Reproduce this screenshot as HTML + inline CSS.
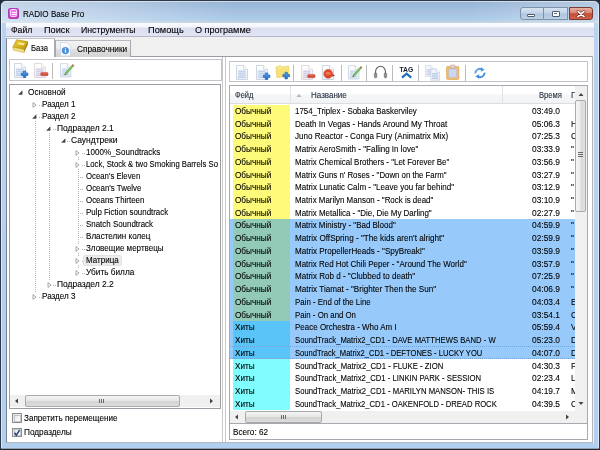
<!DOCTYPE html>
<html lang="ru"><head><meta charset="utf-8"><title>RADIO Base Pro</title>
<style>
html,body{margin:0;padding:0}
html{background:#1d2b3a}
body{width:600px;height:450px;position:relative;overflow:hidden;background:#1d2b3a;font-family:"Liberation Sans",sans-serif;font-size:8.4px;color:#000}
div,span,svg{position:absolute;box-sizing:border-box}
.t{white-space:nowrap;transform-origin:0 50%;line-height:1.2;display:block;-webkit-text-stroke:.1px currentColor}
.win{left:0;top:0;width:599.5px;height:449.3px;border:1px solid #2c3a4c;border-radius:6px 6px 0 0;
 background:linear-gradient(90deg,rgba(255,255,255,.42) 0,rgba(255,255,255,.3) 90px,rgba(255,255,255,0) 230px,rgba(255,255,255,0) 470px,rgba(255,255,255,.22) 560px,rgba(255,255,255,.25) 600px) 0 0/100% 22px no-repeat,linear-gradient(180deg,#9ab3cf 0px,#9bbbdc 5px,#a9c1e1 11px,#a9cbe9 17px,#b6cde3 20px,#c6d6e6 22px,#b9d2ef 23px,#b3cfef 100%)}
.winhl{left:1px;top:1px;width:597.5px;height:447.5px;border:1px solid rgba(255,255,255,.5);border-radius:5px 5px 0 0}
.menu{left:6px;top:22.5px;width:588.2px;height:14px;background:linear-gradient(180deg,#fafbfe 0,#f3f5fc 30%,#dcdfee 40%,#dce0f2 55%,#e0e4f5 100%);border-bottom:1px solid #b4b8c8}
.client{left:6px;top:36.5px;width:588.2px;height:406.2px;background:#f0f0f0}
.page{left:6px;top:56px;width:586.8px;height:386.8px;background:#fff;border:1px solid #b4b6bb;border-left-color:#7b8391;border-top-color:#9a9da4}
.tab1{left:6px;top:37.5px;width:49px;height:19.5px;background:#fff;border:1px solid #a9acb3;border-top-color:#c3c5ca;border-left-color:#7b8391;border-bottom:none}
.tab2{left:54.5px;top:39.5px;width:76.2px;height:17px;background:linear-gradient(180deg,#f3f3f3 0,#ececec 45%,#dfdfdf 55%,#d3d3d3 100%);border:1px solid #a4a7ae;border-top-color:#b9bcc2;border-bottom:none}
.box{background:#fff;border:1px solid #a3a6ad}
.sep{width:1px;background:#b9b9b9}
</style></head><body style="filter:blur(.35px)">

<div class="win"></div><div class="winhl"></div>
<div style="left:7.8px;top:7.7px;width:11.6px;height:11.4px;border-radius:2px;border:1px solid #b23ab4;background:linear-gradient(180deg,#e05ad8,#c63cc6)"></div>
<div style="left:10.2px;top:9.4px;width:6.8px;height:8px;border-radius:1.5px;border:1px solid #fbd5fb;background:#ee7aec"></div>
<div style="left:11.6px;top:12px;width:4px;height:.9px;background:#fff"></div>
<div style="left:11.6px;top:14.2px;width:4px;height:.9px;background:#fff"></div>
<span class="t" style="left:23px;top:9.0px;font-size:9.0px;color:#000;transform:scaleX(0.900);">RADIO Base Pro</span>
<div style="left:519.5px;top:6.5px;width:24px;height:13px;border:1px solid #7f90a8;border-radius:3px 0 0 3px;background:linear-gradient(180deg,#d6e2f0 0,#c2d3e8 48%,#aec4de 52%,#bdd0e6 100%)"></div>
<div style="left:543.5px;top:6.5px;width:24.5px;height:13px;border:1px solid #7f90a8;border-left:none;background:linear-gradient(180deg,#d6e2f0 0,#c2d3e8 48%,#aec4de 52%,#bdd0e6 100%)"></div>
<div style="left:569px;top:6.5px;width:24px;height:13px;border:1px solid #7a3a32;border-radius:0 3px 3px 0;background:linear-gradient(180deg,#e8b0a3 0,#d98572 45%,#c84c36 52%,#d0614a 100%)"></div>
<div style="left:527px;top:13.5px;width:8px;height:3px;background:#fff;border:0.6px solid #4d5b6e;border-radius:1px"></div>
<div style="left:551.5px;top:10.5px;width:8px;height:6px;background:#fff;border:0.6px solid #4d5b6e;border-radius:1px"></div>
<div style="left:553.6px;top:12.7px;width:3.8px;height:1.8px;background:#5a6a80"></div>
<svg style="left:576px;top:9.6px" width="10" height="8" viewBox="0 0 10 8"><path d="M2 1.4 L8 6.6 M8 1.4 L2 6.6" stroke="#6a2a20" stroke-width="2.8" stroke-linecap="round"/><path d="M2 1.4 L8 6.6 M8 1.4 L2 6.6" stroke="#fff" stroke-width="1.7" stroke-linecap="round"/></svg>
<div class="menu"></div>
<span class="t" style="left:11.3px;top:25.0px;font-size:9.2px;color:#000;transform:scaleX(0.943);">Файл</span>
<span class="t" style="left:44.3px;top:25.0px;font-size:9.2px;color:#000;transform:scaleX(1.001);">Поиск</span>
<span class="t" style="left:81.3px;top:25.0px;font-size:9.2px;color:#000;transform:scaleX(0.951);">Инструменты</span>
<span class="t" style="left:148.2px;top:25.0px;font-size:9.2px;color:#000;transform:scaleX(1.006);">Помощь</span>
<span class="t" style="left:195.4px;top:25.0px;font-size:9.2px;color:#000;transform:scaleX(0.991);">О программе</span>
<div class="client"></div>
<div class="page"></div>
<div class="tab2"></div><div class="tab1"></div>
<span class="t" style="left:31px;top:42.8px;font-size:8.6px;color:#000;transform:scaleX(0.893);">База</span>
<span class="t" style="left:77px;top:44.0px;font-size:8.6px;color:#000;transform:scaleX(0.964);">Справочники</span>
<div class="box" style="left:9px;top:58.8px;width:212.5px;height:22px;border-color:#c2c4c9"></div>
<div class="box" style="left:9px;top:84px;width:211.5px;height:324.6px;border-color:#9a9da4"></div>
<div style="left:222px;top:57px;width:1px;height:385px;background:#c8c8c8"></div>
<div style="left:225.2px;top:57px;width:1px;height:385px;background:#c8c8c8"></div>
<div class="box" style="left:229px;top:61px;width:358.8px;height:21px;border-color:#c2c4c9"></div>
<div class="box" style="left:229px;top:85px;width:358.8px;height:339px;border-color:#a6a9af"></div>
<div class="box" style="left:229px;top:423.2px;width:358.8px;height:16.6px;border-color:#a6a9af"></div>
<span class="t" style="left:232.5px;top:426.9px;font-size:8.7px;color:#000;transform:scaleX(0.939);">Всего: 62</span>
<div style="left:10px;top:85px;width:209.5px;height:309.5px;overflow:hidden">
<div style="left:25px;top:35.599999999999994px;width:1px;height:172.00000000000003px;background:repeating-linear-gradient(180deg,#b4b4b4 0,#b4b4b4 1px,transparent 1px,transparent 2px)"></div>
<div style="left:39.3px;top:47.599999999999994px;width:1px;height:148.00000000000003px;background:repeating-linear-gradient(180deg,#b4b4b4 0,#b4b4b4 1px,transparent 1px,transparent 2px)"></div>
<div style="left:67.8px;top:71.6px;width:1px;height:112.00000000000003px;background:repeating-linear-gradient(180deg,#b4b4b4 0,#b4b4b4 1px,transparent 1px,transparent 2px)"></div>
<svg style="left:6.699999999999999px;top:4.0px" width="7" height="7" viewBox="0 0 7 7"><rect x="0" y="0" width="7" height="7" fill="#fff"/><path d="M5.2 1.8 L5.2 5.4 L1.6 5.4 Z" fill="#4a4a4a" stroke="#333" stroke-width=".4"/></svg>
<span class="t" style="left:18.0px;top:2.0px;font-size:8.7px;color:#000;transform:scaleX(0.944);">Основной</span>
<svg style="left:21.199999999999996px;top:15.599999999999994px" width="7" height="8" viewBox="0 0 7 8"><rect x="0" y="0" width="7" height="8" fill="#fff"/><path d="M2 1.6 L5.1 4 L2 6.4 Z" fill="#fff" stroke="#929292" stroke-width=".8"/></svg>
<div style="left:28.799999999999997px;top:19.599999999999994px;width:3.0px;height:1px;background:repeating-linear-gradient(90deg,#b4b4b4 0,#b4b4b4 1px,transparent 1px,transparent 2px)"></div>
<span class="t" style="left:32.3px;top:14.0px;font-size:8.7px;color:#000;transform:scaleX(0.931);">Раздел 1</span>
<svg style="left:20.999999999999996px;top:28.0px" width="7" height="7" viewBox="0 0 7 7"><rect x="0" y="0" width="7" height="7" fill="#fff"/><path d="M5.2 1.8 L5.2 5.4 L1.6 5.4 Z" fill="#4a4a4a" stroke="#333" stroke-width=".4"/></svg>
<div style="left:28.799999999999997px;top:31.599999999999994px;width:3.0px;height:1px;background:repeating-linear-gradient(90deg,#b4b4b4 0,#b4b4b4 1px,transparent 1px,transparent 2px)"></div>
<span class="t" style="left:32.3px;top:26.0px;font-size:8.7px;color:#000;transform:scaleX(0.931);">Раздел 2</span>
<svg style="left:35.300000000000004px;top:40.0px" width="7" height="7" viewBox="0 0 7 7"><rect x="0" y="0" width="7" height="7" fill="#fff"/><path d="M5.2 1.8 L5.2 5.4 L1.6 5.4 Z" fill="#4a4a4a" stroke="#333" stroke-width=".4"/></svg>
<div style="left:43.1px;top:43.599999999999994px;width:3.0px;height:1px;background:repeating-linear-gradient(90deg,#b4b4b4 0,#b4b4b4 1px,transparent 1px,transparent 2px)"></div>
<span class="t" style="left:46.6px;top:38.0px;font-size:8.7px;color:#000;transform:scaleX(0.969);">Подраздел 2.1</span>
<svg style="left:49.60000000000001px;top:52.0px" width="7" height="7" viewBox="0 0 7 7"><rect x="0" y="0" width="7" height="7" fill="#fff"/><path d="M5.2 1.8 L5.2 5.4 L1.6 5.4 Z" fill="#4a4a4a" stroke="#333" stroke-width=".4"/></svg>
<div style="left:57.400000000000006px;top:55.599999999999994px;width:3.0px;height:1px;background:repeating-linear-gradient(90deg,#b4b4b4 0,#b4b4b4 1px,transparent 1px,transparent 2px)"></div>
<span class="t" style="left:60.900000000000006px;top:50.0px;font-size:8.7px;color:#000;transform:scaleX(0.976);">Саундтреки</span>
<svg style="left:64.10000000000001px;top:63.599999999999994px" width="7" height="8" viewBox="0 0 7 8"><rect x="0" y="0" width="7" height="8" fill="#fff"/><path d="M2 1.6 L5.1 4 L2 6.4 Z" fill="#fff" stroke="#929292" stroke-width=".8"/></svg>
<div style="left:71.7px;top:67.6px;width:3.0px;height:1px;background:repeating-linear-gradient(90deg,#b4b4b4 0,#b4b4b4 1px,transparent 1px,transparent 2px)"></div>
<span class="t" style="left:75.7px;top:62.0px;font-size:8.7px;color:#000;transform:scaleX(0.928);">1000%_Soundtracks</span>
<svg style="left:64.10000000000001px;top:75.6px" width="7" height="8" viewBox="0 0 7 8"><rect x="0" y="0" width="7" height="8" fill="#fff"/><path d="M2 1.6 L5.1 4 L2 6.4 Z" fill="#fff" stroke="#929292" stroke-width=".8"/></svg>
<div style="left:71.7px;top:79.6px;width:3.0px;height:1px;background:repeating-linear-gradient(90deg,#b4b4b4 0,#b4b4b4 1px,transparent 1px,transparent 2px)"></div>
<span class="t" style="left:75.7px;top:74.0px;font-size:8.7px;color:#000;transform:scaleX(0.890);">Lock, Stock &amp; two Smoking Barrels So</span>
<div style="left:68px;top:91.6px;width:6px;height:1px;background:repeating-linear-gradient(90deg,#b4b4b4 0,#b4b4b4 1px,transparent 1px,transparent 2px)"></div>
<span class="t" style="left:75.7px;top:86.0px;font-size:8.7px;color:#000;transform:scaleX(0.895);">Ocean's Eleven</span>
<div style="left:68px;top:103.6px;width:6px;height:1px;background:repeating-linear-gradient(90deg,#b4b4b4 0,#b4b4b4 1px,transparent 1px,transparent 2px)"></div>
<span class="t" style="left:75.7px;top:98.0px;font-size:8.7px;color:#000;transform:scaleX(0.911);">Ocean's Twelve</span>
<div style="left:68px;top:115.6px;width:6px;height:1px;background:repeating-linear-gradient(90deg,#b4b4b4 0,#b4b4b4 1px,transparent 1px,transparent 2px)"></div>
<span class="t" style="left:75.7px;top:110.0px;font-size:8.7px;color:#000;transform:scaleX(0.911);">Oceans Thirteen</span>
<div style="left:68px;top:127.6px;width:6px;height:1px;background:repeating-linear-gradient(90deg,#b4b4b4 0,#b4b4b4 1px,transparent 1px,transparent 2px)"></div>
<span class="t" style="left:75.7px;top:122.0px;font-size:8.7px;color:#000;transform:scaleX(0.910);">Pulp Fiction soundtrack</span>
<div style="left:68px;top:139.6px;width:6px;height:1px;background:repeating-linear-gradient(90deg,#b4b4b4 0,#b4b4b4 1px,transparent 1px,transparent 2px)"></div>
<span class="t" style="left:75.7px;top:134.0px;font-size:8.7px;color:#000;transform:scaleX(0.913);">Snatch Soundtrack</span>
<div style="left:68px;top:151.6px;width:6px;height:1px;background:repeating-linear-gradient(90deg,#b4b4b4 0,#b4b4b4 1px,transparent 1px,transparent 2px)"></div>
<span class="t" style="left:75.7px;top:146.0px;font-size:8.7px;color:#000;transform:scaleX(0.932);">Властелин колец</span>
<svg style="left:64.10000000000001px;top:159.6px" width="7" height="8" viewBox="0 0 7 8"><rect x="0" y="0" width="7" height="8" fill="#fff"/><path d="M2 1.6 L5.1 4 L2 6.4 Z" fill="#fff" stroke="#929292" stroke-width=".8"/></svg>
<div style="left:71.7px;top:163.6px;width:3.0px;height:1px;background:repeating-linear-gradient(90deg,#b4b4b4 0,#b4b4b4 1px,transparent 1px,transparent 2px)"></div>
<span class="t" style="left:75.7px;top:158.0px;font-size:8.7px;color:#000;transform:scaleX(0.926);">Зловещие мертвецы</span>
<svg style="left:64.10000000000001px;top:171.60000000000002px" width="7" height="8" viewBox="0 0 7 8"><rect x="0" y="0" width="7" height="8" fill="#fff"/><path d="M2 1.6 L5.1 4 L2 6.4 Z" fill="#fff" stroke="#929292" stroke-width=".8"/></svg>
<div style="left:71.7px;top:175.60000000000002px;width:3.0px;height:1px;background:repeating-linear-gradient(90deg,#b4b4b4 0,#b4b4b4 1px,transparent 1px,transparent 2px)"></div>
<div style="left:72.5px;top:170.20000000000002px;width:39px;height:11px;background:#ececec;border:1px solid #e2e2e2;border-radius:2px"></div>
<span class="t" style="left:75.7px;top:170.00000000000003px;font-size:8.7px;color:#000;transform:scaleX(0.922);">Матрица</span>
<svg style="left:64.10000000000001px;top:183.60000000000002px" width="7" height="8" viewBox="0 0 7 8"><rect x="0" y="0" width="7" height="8" fill="#fff"/><path d="M2 1.6 L5.1 4 L2 6.4 Z" fill="#fff" stroke="#929292" stroke-width=".8"/></svg>
<div style="left:71.7px;top:187.60000000000002px;width:3.0px;height:1px;background:repeating-linear-gradient(90deg,#b4b4b4 0,#b4b4b4 1px,transparent 1px,transparent 2px)"></div>
<span class="t" style="left:75.7px;top:182.0px;font-size:8.7px;color:#000;transform:scaleX(0.949);">Убить билла</span>
<svg style="left:35.5px;top:195.60000000000002px" width="7" height="8" viewBox="0 0 7 8"><rect x="0" y="0" width="7" height="8" fill="#fff"/><path d="M2 1.6 L5.1 4 L2 6.4 Z" fill="#fff" stroke="#929292" stroke-width=".8"/></svg>
<div style="left:43.1px;top:199.60000000000002px;width:3.0px;height:1px;background:repeating-linear-gradient(90deg,#b4b4b4 0,#b4b4b4 1px,transparent 1px,transparent 2px)"></div>
<span class="t" style="left:46.6px;top:194.0px;font-size:8.7px;color:#000;transform:scaleX(0.969);">Подраздел 2.2</span>
<svg style="left:21.199999999999996px;top:207.60000000000002px" width="7" height="8" viewBox="0 0 7 8"><rect x="0" y="0" width="7" height="8" fill="#fff"/><path d="M2 1.6 L5.1 4 L2 6.4 Z" fill="#fff" stroke="#929292" stroke-width=".8"/></svg>
<div style="left:28.799999999999997px;top:211.60000000000002px;width:3.0px;height:1px;background:repeating-linear-gradient(90deg,#b4b4b4 0,#b4b4b4 1px,transparent 1px,transparent 2px)"></div>
<span class="t" style="left:32.3px;top:206.0px;font-size:8.7px;color:#000;transform:scaleX(0.931);">Раздел 3</span>
</div>
<div style="left:10px;top:394.5px;width:209.5px;height:12.5px;background:#f0f0f0"></div>
<div style="left:24.5px;top:395px;width:155px;height:11.5px;border:1px solid #a9a9a9;border-radius:2px;background:linear-gradient(180deg,#f4f4f4 0,#e6e6e6 48%,#d4d4d4 52%,#dcdcdc 100%)"></div>
<div style="left:98.5px;top:398.5px;width:1px;height:4.5px;background:#6a6a6a"></div>
<div style="left:100.5px;top:398.5px;width:1px;height:4.5px;background:#6a6a6a"></div>
<div style="left:102.5px;top:398.5px;width:1px;height:4.5px;background:#6a6a6a"></div>
<svg style="left:13.5px;top:398px" width="5" height="6" viewBox="0 0 5 6"><path d="M4 .5 L1 3 L4 5.5Z" fill="#444"/></svg>
<svg style="left:209px;top:398px" width="5" height="6" viewBox="0 0 5 6"><path d="M1 .5 L4 3 L1 5.5Z" fill="#444"/></svg>
<div style="left:12px;top:413px;width:9.6px;height:9.6px;border:1px solid #8e8f8f;background:linear-gradient(135deg,#dfe0e1,#fafafa)"></div>
<div style="left:13.5px;top:414.5px;width:7px;height:7px;border:1px solid #c2c5c9;background:linear-gradient(135deg,#e8e9ea,#ffffff)"></div>
<span class="t" style="left:23.8px;top:412.6px;font-size:8.6px;color:#000;transform:scaleX(0.942);">Запретить перемещение</span>
<div style="left:12px;top:427.5px;width:9.6px;height:9.6px;border:1px solid #8e8f8f;background:linear-gradient(135deg,#dfe0e1,#fafafa)"></div>
<div style="left:13.5px;top:429.0px;width:7px;height:7px;border:1px solid #c2c5c9;background:linear-gradient(135deg,#e8e9ea,#ffffff)"></div>
<svg style="left:13px;top:428.5px" width="8" height="8" viewBox="0 0 8 8"><path d="M1.5 3.8 L3.3 6.2 L6.6 1.2" fill="none" stroke="#2a3f7a" stroke-width="1.5"/></svg>
<span class="t" style="left:23.8px;top:427.1px;font-size:8.6px;color:#000;transform:scaleX(0.958);">Подразделы</span>
<div style="left:230px;top:86px;width:357px;height:337px;overflow:hidden;background:#fff">
<div style="left:0;top:0;width:357px;height:18.4px;background:linear-gradient(180deg,#ffffff 0,#ffffff 45%,#f5f6f8 55%,#f2f3f5 100%);border-bottom:1px solid #dcdde0"></div>
<div style="left:60px;top:0;width:1px;height:17.5px;background:#e0e3e8"></div>
<div style="left:272px;top:0;width:1px;height:17.5px;background:#e0e3e8"></div>
<span class="t" style="left:5px;top:4.1px;font-size:8.7px;color:#1e2a3a;transform:scaleX(0.861);">Фейд</span>
<span class="t" style="left:81px;top:4.1px;font-size:8.7px;color:#1e2a3a;transform:scaleX(0.922);">Название</span>
<span class="t" style="left:308.5px;top:4.1px;font-size:8.7px;color:#1e2a3a;transform:scaleX(0.876);">Время</span>
<span class="t" style="left:340.5px;top:4.1px;font-size:8.7px;color:#1e2a3a;transform:scaleX(0.990);">Г</span>
<svg style="left:66px;top:7.4px" width="6" height="4.4" viewBox="0 0 7 5"><path d="M.5 4.5 L3.5 .8 L6.5 4.5Z" fill="#b4bbc5"/></svg>
<div style="left:2.5px;top:18.60px;width:57.4px;height:12.84px;background:#fffb7a"></div>
<span class="t" style="left:5px;top:19.80px;font-size:8.7px;color:#000;transform:scaleX(0.943);">Обычный</span>
<span class="t" style="left:65px;top:19.80px;font-size:8.7px;color:#000;transform:scaleX(0.909);">1754_Triplex - Sobaka Baskerviley</span>
<span class="t" style="left:302px;top:19.80px;font-size:8.7px;color:#000;transform:scaleX(0.966);">03:49.0</span>
<div style="left:2.5px;top:31.34px;width:57.4px;height:12.84px;background:#fffb7a"></div>
<span class="t" style="left:5px;top:32.54px;font-size:8.7px;color:#000;transform:scaleX(0.943);">Обычный</span>
<span class="t" style="left:65px;top:32.54px;font-size:8.7px;color:#000;transform:scaleX(0.931);">Death In Vegas - Hands Around My Throat</span>
<span class="t" style="left:302px;top:32.54px;font-size:8.7px;color:#000;transform:scaleX(0.966);">05:06.3</span>
<span class="t" style="left:340.5px;top:32.54px;font-size:8.7px;color:#000;transform:scaleX(0.950);">H</span>
<div style="left:2.5px;top:44.08px;width:57.4px;height:12.84px;background:#fffb7a"></div>
<span class="t" style="left:5px;top:45.28px;font-size:8.7px;color:#000;transform:scaleX(0.943);">Обычный</span>
<span class="t" style="left:65px;top:45.28px;font-size:8.7px;color:#000;transform:scaleX(0.928);">Juno Reactor - Conga Fury (Animatrix Mix)</span>
<span class="t" style="left:302px;top:45.28px;font-size:8.7px;color:#000;transform:scaleX(0.966);">07:25.3</span>
<span class="t" style="left:340.5px;top:45.28px;font-size:8.7px;color:#000;transform:scaleX(0.950);">C</span>
<div style="left:2.5px;top:56.82px;width:57.4px;height:12.84px;background:#fffb7a"></div>
<span class="t" style="left:5px;top:58.02px;font-size:8.7px;color:#000;transform:scaleX(0.943);">Обычный</span>
<span class="t" style="left:65px;top:58.02px;font-size:8.7px;color:#000;transform:scaleX(0.923);">Matrix AeroSmith - "Falling In love"</span>
<span class="t" style="left:302px;top:58.02px;font-size:8.7px;color:#000;transform:scaleX(0.966);">03:33.9</span>
<span class="t" style="left:340.5px;top:58.02px;font-size:8.7px;color:#000;transform:scaleX(0.950);">"</span>
<div style="left:2.5px;top:69.56px;width:57.4px;height:12.84px;background:#fffb7a"></div>
<span class="t" style="left:5px;top:70.76px;font-size:8.7px;color:#000;transform:scaleX(0.943);">Обычный</span>
<span class="t" style="left:65px;top:70.76px;font-size:8.7px;color:#000;transform:scaleX(0.914);">Matrix Chemical Brothers - "Let Forever Be"</span>
<span class="t" style="left:302px;top:70.76px;font-size:8.7px;color:#000;transform:scaleX(0.966);">03:56.9</span>
<span class="t" style="left:340.5px;top:70.76px;font-size:8.7px;color:#000;transform:scaleX(0.950);">"</span>
<div style="left:2.5px;top:82.30px;width:57.4px;height:12.84px;background:#fffb7a"></div>
<span class="t" style="left:5px;top:83.50px;font-size:8.7px;color:#000;transform:scaleX(0.943);">Обычный</span>
<span class="t" style="left:65px;top:83.50px;font-size:8.7px;color:#000;transform:scaleX(0.902);">Matrix Guns n' Roses - "Down on the Farm"</span>
<span class="t" style="left:302px;top:83.50px;font-size:8.7px;color:#000;transform:scaleX(0.966);">03:27.9</span>
<span class="t" style="left:340.5px;top:83.50px;font-size:8.7px;color:#000;transform:scaleX(0.950);">"</span>
<div style="left:2.5px;top:95.04px;width:57.4px;height:12.84px;background:#fffb7a"></div>
<span class="t" style="left:5px;top:96.24px;font-size:8.7px;color:#000;transform:scaleX(0.943);">Обычный</span>
<span class="t" style="left:65px;top:96.24px;font-size:8.7px;color:#000;transform:scaleX(0.926);">Matrix Lunatic Calm - "Leave you far behind"</span>
<span class="t" style="left:302px;top:96.24px;font-size:8.7px;color:#000;transform:scaleX(0.966);">03:12.9</span>
<span class="t" style="left:340.5px;top:96.24px;font-size:8.7px;color:#000;transform:scaleX(0.950);">"</span>
<div style="left:2.5px;top:107.78px;width:57.4px;height:12.84px;background:#fffb7a"></div>
<span class="t" style="left:5px;top:108.98px;font-size:8.7px;color:#000;transform:scaleX(0.943);">Обычный</span>
<span class="t" style="left:65px;top:108.98px;font-size:8.7px;color:#000;transform:scaleX(0.913);">Matrix Marilyn Manson - "Rock is dead"</span>
<span class="t" style="left:302px;top:108.98px;font-size:8.7px;color:#000;transform:scaleX(0.966);">03:10.9</span>
<span class="t" style="left:340.5px;top:108.98px;font-size:8.7px;color:#000;transform:scaleX(0.950);">"</span>
<div style="left:2.5px;top:120.52px;width:57.4px;height:12.84px;background:#fffb7a"></div>
<span class="t" style="left:5px;top:121.72px;font-size:8.7px;color:#000;transform:scaleX(0.943);">Обычный</span>
<span class="t" style="left:65px;top:121.72px;font-size:8.7px;color:#000;transform:scaleX(0.917);">Matrix Metallica - "Die, Die My Darling"</span>
<span class="t" style="left:302px;top:121.72px;font-size:8.7px;color:#000;transform:scaleX(0.966);">02:27.9</span>
<span class="t" style="left:340.5px;top:121.72px;font-size:8.7px;color:#000;transform:scaleX(0.950);">"</span>
<div style="left:0;top:133.26px;width:345px;height:12.84px;background:#97cafb"></div>
<div style="left:2.5px;top:133.26px;width:57.4px;height:12.84px;background:#92cab7"></div>
<span class="t" style="left:5px;top:134.46px;font-size:8.7px;color:#000;transform:scaleX(0.943);">Обычный</span>
<span class="t" style="left:65px;top:134.46px;font-size:8.7px;color:#000;transform:scaleX(0.916);">Matrix Ministry - "Bad Blood"</span>
<span class="t" style="left:302px;top:134.46px;font-size:8.7px;color:#000;transform:scaleX(0.966);">04:59.9</span>
<span class="t" style="left:340.5px;top:134.46px;font-size:8.7px;color:#000;transform:scaleX(0.950);">"</span>
<div style="left:0;top:146.00px;width:345px;height:12.84px;background:#97cafb"></div>
<div style="left:2.5px;top:146.00px;width:57.4px;height:12.84px;background:#92cab7"></div>
<span class="t" style="left:5px;top:147.20px;font-size:8.7px;color:#000;transform:scaleX(0.943);">Обычный</span>
<span class="t" style="left:65px;top:147.20px;font-size:8.7px;color:#000;transform:scaleX(0.937);">Matrix OffSpring - "The kids aren't alright"</span>
<span class="t" style="left:302px;top:147.20px;font-size:8.7px;color:#000;transform:scaleX(0.966);">02:59.9</span>
<span class="t" style="left:340.5px;top:147.20px;font-size:8.7px;color:#000;transform:scaleX(0.950);">"</span>
<div style="left:0;top:158.74px;width:345px;height:12.84px;background:#97cafb"></div>
<div style="left:2.5px;top:158.74px;width:57.4px;height:12.84px;background:#92cab7"></div>
<span class="t" style="left:5px;top:159.94px;font-size:8.7px;color:#000;transform:scaleX(0.943);">Обычный</span>
<span class="t" style="left:65px;top:159.94px;font-size:8.7px;color:#000;transform:scaleX(0.929);">Matrix PropellerHeads - "SpyBreak!"</span>
<span class="t" style="left:302px;top:159.94px;font-size:8.7px;color:#000;transform:scaleX(0.966);">03:59.9</span>
<span class="t" style="left:340.5px;top:159.94px;font-size:8.7px;color:#000;transform:scaleX(0.950);">"</span>
<div style="left:0;top:171.48px;width:345px;height:12.84px;background:#97cafb"></div>
<div style="left:2.5px;top:171.48px;width:57.4px;height:12.84px;background:#92cab7"></div>
<span class="t" style="left:5px;top:172.68px;font-size:8.7px;color:#000;transform:scaleX(0.943);">Обычный</span>
<span class="t" style="left:65px;top:172.68px;font-size:8.7px;color:#000;transform:scaleX(0.919);">Matrix Red Hot Chili Peper - "Around The World"</span>
<span class="t" style="left:302px;top:172.68px;font-size:8.7px;color:#000;transform:scaleX(0.966);">03:57.9</span>
<span class="t" style="left:340.5px;top:172.68px;font-size:8.7px;color:#000;transform:scaleX(0.950);">"</span>
<div style="left:0;top:184.22px;width:345px;height:12.84px;background:#97cafb"></div>
<div style="left:2.5px;top:184.22px;width:57.4px;height:12.84px;background:#92cab7"></div>
<span class="t" style="left:5px;top:185.42px;font-size:8.7px;color:#000;transform:scaleX(0.943);">Обычный</span>
<span class="t" style="left:65px;top:185.42px;font-size:8.7px;color:#000;transform:scaleX(0.928);">Matrix Rob d - "Clubbed to death"</span>
<span class="t" style="left:302px;top:185.42px;font-size:8.7px;color:#000;transform:scaleX(0.966);">07:25.9</span>
<span class="t" style="left:340.5px;top:185.42px;font-size:8.7px;color:#000;transform:scaleX(0.950);">"</span>
<div style="left:0;top:196.96px;width:345px;height:12.84px;background:#97cafb"></div>
<div style="left:2.5px;top:196.96px;width:57.4px;height:12.84px;background:#92cab7"></div>
<span class="t" style="left:5px;top:198.16px;font-size:8.7px;color:#000;transform:scaleX(0.943);">Обычный</span>
<span class="t" style="left:65px;top:198.16px;font-size:8.7px;color:#000;transform:scaleX(0.935);">Matrix Tiamat - "Brighter Then the Sun"</span>
<span class="t" style="left:302px;top:198.16px;font-size:8.7px;color:#000;transform:scaleX(0.966);">04:06.9</span>
<span class="t" style="left:340.5px;top:198.16px;font-size:8.7px;color:#000;transform:scaleX(0.950);">"</span>
<div style="left:0;top:209.70px;width:345px;height:12.84px;background:#97cafb"></div>
<div style="left:2.5px;top:209.70px;width:57.4px;height:12.84px;background:#92cab7"></div>
<span class="t" style="left:5px;top:210.90px;font-size:8.7px;color:#000;transform:scaleX(0.943);">Обычный</span>
<span class="t" style="left:65px;top:210.90px;font-size:8.7px;color:#000;transform:scaleX(0.906);">Pain - End of the Line</span>
<span class="t" style="left:302px;top:210.90px;font-size:8.7px;color:#000;transform:scaleX(0.966);">04:03.4</span>
<span class="t" style="left:340.5px;top:210.90px;font-size:8.7px;color:#000;transform:scaleX(0.950);">E</span>
<div style="left:0;top:222.44px;width:345px;height:12.84px;background:#97cafb"></div>
<div style="left:2.5px;top:222.44px;width:57.4px;height:12.84px;background:#92cab7"></div>
<span class="t" style="left:5px;top:223.64px;font-size:8.7px;color:#000;transform:scaleX(0.943);">Обычный</span>
<span class="t" style="left:65px;top:223.64px;font-size:8.7px;color:#000;transform:scaleX(0.902);">Pain - On and On</span>
<span class="t" style="left:302px;top:223.64px;font-size:8.7px;color:#000;transform:scaleX(0.966);">03:54.1</span>
<span class="t" style="left:340.5px;top:223.64px;font-size:8.7px;color:#000;transform:scaleX(0.950);">C</span>
<div style="left:0;top:235.18px;width:345px;height:12.84px;background:#97cafb"></div>
<div style="left:2.5px;top:235.18px;width:57.4px;height:12.84px;background:#58c4f7"></div>
<span class="t" style="left:5px;top:236.38px;font-size:8.7px;color:#000;transform:scaleX(0.939);">Хиты</span>
<span class="t" style="left:65px;top:236.38px;font-size:8.7px;color:#000;transform:scaleX(0.920);">Peace Orchestra - Who Am I</span>
<span class="t" style="left:302px;top:236.38px;font-size:8.7px;color:#000;transform:scaleX(0.966);">05:59.4</span>
<span class="t" style="left:340.5px;top:236.38px;font-size:8.7px;color:#000;transform:scaleX(0.950);">V</span>
<div style="left:0;top:247.92px;width:345px;height:12.84px;background:#97cafb"></div>
<div style="left:2.5px;top:247.92px;width:57.4px;height:12.84px;background:#58c4f7"></div>
<span class="t" style="left:5px;top:249.12px;font-size:8.7px;color:#000;transform:scaleX(0.939);">Хиты</span>
<span class="t" style="left:65px;top:249.12px;font-size:8.7px;color:#000;transform:scaleX(0.885);">SoundTrack_Matrix2_CD1 - DAVE MATTHEWS BAND - W</span>
<span class="t" style="left:302px;top:249.12px;font-size:8.7px;color:#000;transform:scaleX(0.966);">05:23.0</span>
<span class="t" style="left:340.5px;top:249.12px;font-size:8.7px;color:#000;transform:scaleX(0.950);">D</span>
<div style="left:0;top:260.66px;width:345px;height:12.84px;background:#97cafb"></div>
<div style="left:2.5px;top:260.66px;width:57.4px;height:12.84px;background:#58c4f7"></div>
<span class="t" style="left:5px;top:261.86px;font-size:8.7px;color:#000;transform:scaleX(0.939);">Хиты</span>
<span class="t" style="left:65px;top:261.86px;font-size:8.7px;color:#000;transform:scaleX(0.873);">SoundTrack_Matrix2_CD1 - DEFTONES - LUCKY YOU</span>
<span class="t" style="left:302px;top:261.86px;font-size:8.7px;color:#000;transform:scaleX(0.966);">04:07.0</span>
<span class="t" style="left:340.5px;top:261.86px;font-size:8.7px;color:#000;transform:scaleX(0.950);">D</span>
<div style="left:2.5px;top:273.40px;width:57.4px;height:12.84px;background:#80fdff"></div>
<span class="t" style="left:5px;top:274.60px;font-size:8.7px;color:#000;transform:scaleX(0.939);">Хиты</span>
<span class="t" style="left:65px;top:274.60px;font-size:8.7px;color:#000;transform:scaleX(0.892);">SoundTrack_Matrix2_CD1 - FLUKE - ZION</span>
<span class="t" style="left:302px;top:274.60px;font-size:8.7px;color:#000;transform:scaleX(0.966);">04:30.3</span>
<span class="t" style="left:340.5px;top:274.60px;font-size:8.7px;color:#000;transform:scaleX(0.950);">F</span>
<div style="left:2.5px;top:286.14px;width:57.4px;height:12.84px;background:#80fdff"></div>
<span class="t" style="left:5px;top:287.34px;font-size:8.7px;color:#000;transform:scaleX(0.939);">Хиты</span>
<span class="t" style="left:65px;top:287.34px;font-size:8.7px;color:#000;transform:scaleX(0.888);">SoundTrack_Matrix2_CD1 - LINKIN PARK - SESSION</span>
<span class="t" style="left:302px;top:287.34px;font-size:8.7px;color:#000;transform:scaleX(0.966);">02:23.4</span>
<span class="t" style="left:340.5px;top:287.34px;font-size:8.7px;color:#000;transform:scaleX(0.950);">L</span>
<div style="left:2.5px;top:298.88px;width:57.4px;height:12.84px;background:#80fdff"></div>
<span class="t" style="left:5px;top:300.08px;font-size:8.7px;color:#000;transform:scaleX(0.939);">Хиты</span>
<span class="t" style="left:65px;top:300.08px;font-size:8.7px;color:#000;transform:scaleX(0.890);">SoundTrack_Matrix2_CD1 - MARILYN MANSON- THIS IS</span>
<span class="t" style="left:302px;top:300.08px;font-size:8.7px;color:#000;transform:scaleX(0.966);">04:19.7</span>
<span class="t" style="left:340.5px;top:300.08px;font-size:8.7px;color:#000;transform:scaleX(0.950);">M</span>
<div style="left:2.5px;top:311.62px;width:57.4px;height:12.84px;background:#80fdff"></div>
<span class="t" style="left:5px;top:312.82px;font-size:8.7px;color:#000;transform:scaleX(0.939);">Хиты</span>
<span class="t" style="left:65px;top:312.82px;font-size:8.7px;color:#000;transform:scaleX(0.881);">SoundTrack_Matrix2_CD1 - OAKENFOLD - DREAD ROCK</span>
<span class="t" style="left:302px;top:312.82px;font-size:8.7px;color:#000;transform:scaleX(0.966);">04:39.5</span>
<span class="t" style="left:340.5px;top:312.82px;font-size:8.7px;color:#000;transform:scaleX(0.950);">C</span>
<div style="left:0;top:260.16px;width:345px;height:13.34px;border:1px dotted #6fa6de;border-left:none;border-right:none"></div>
<div style="left:344.5px;top:0;width:12.5px;height:325px;background:#f0f0f0"></div>
<div style="left:344.5px;top:14px;width:11.5px;height:112px;border:1px solid #ababab;border-radius:2px;background:linear-gradient(90deg,#f6f6f6 0,#eaeaea 48%,#d9d9d9 52%,#e0e0e0 100%)"></div>
<div style="left:348px;top:66px;width:4.5px;height:1px;background:#6a6a6a"></div>
<div style="left:348px;top:68px;width:4.5px;height:1px;background:#6a6a6a"></div>
<div style="left:348px;top:70px;width:4.5px;height:1px;background:#6a6a6a"></div>
<svg style="left:347.5px;top:6px" width="6" height="5" viewBox="0 0 6 5"><path d="M.5 4 L3 1 L5.5 4Z" fill="#444"/></svg>
<svg style="left:347.5px;top:315px" width="6" height="5" viewBox="0 0 6 5"><path d="M.5 1 L3 4 L5.5 1Z" fill="#444"/></svg>
<div style="left:0;top:325px;width:357px;height:12px;background:#f0f0f0"></div>
<div style="left:15px;top:325px;width:77px;height:11.5px;border:1px solid #a9a9a9;border-radius:2px;background:linear-gradient(180deg,#f4f4f4 0,#e6e6e6 48%,#d4d4d4 52%,#dcdcdc 100%)"></div>
<div style="left:50.5px;top:328.5px;width:1px;height:4.5px;background:#6a6a6a"></div>
<div style="left:52.5px;top:328.5px;width:1px;height:4.5px;background:#6a6a6a"></div>
<div style="left:54.5px;top:328.5px;width:1px;height:4.5px;background:#6a6a6a"></div>
<svg style="left:4px;top:328px" width="5" height="6" viewBox="0 0 5 6"><path d="M4 .5 L1 3 L4 5.5Z" fill="#444"/></svg>
<svg style="left:335px;top:328px" width="5" height="6" viewBox="0 0 5 6"><path d="M1 .5 L4 3 L1 5.5Z" fill="#444"/></svg>
</div>
<svg width="0" height="0" style="left:0;top:0"><defs><linearGradient id="gd" x1="0" y1="0" x2="0" y2="1"><stop offset="0" stop-color="#ffffff"/><stop offset="1" stop-color="#eaeff7"/></linearGradient><linearGradient id="gr" x1="0" y1="0" x2="0" y2="1"><stop offset="0" stop-color="#ffffff"/><stop offset="1" stop-color="#f6ebea"/></linearGradient><linearGradient id="gb" x1="0" y1="0" x2="0" y2="1"><stop offset="0" stop-color="#5aa7ee"/><stop offset="1" stop-color="#1f69c4"/></linearGradient><linearGradient id="gm" x1="0" y1="0" x2="0" y2="1"><stop offset="0" stop-color="#ee7a66"/><stop offset="1" stop-color="#c7311f"/></linearGradient><linearGradient id="gf" x1="0" y1="0" x2="0" y2="1"><stop offset="0" stop-color="#fbee9a"/><stop offset="1" stop-color="#f0cf4a"/></linearGradient><linearGradient id="gk" x1="0" y1="0" x2="1" y2="1"><stop offset="0" stop-color="#efd23c"/><stop offset="1" stop-color="#bd9206"/></linearGradient></defs></svg>
<svg style="left:11.5px;top:39px" width="17" height="15" viewBox="0 0 17 15"><path d="M4.6 0.8 L15.8 2.6 L12.2 10.6 L0.8 8.2 Z" fill="url(#gk)" stroke="#b08a10" stroke-width=".6"/><path d="M0.8 8.2 L12.2 10.6 L12.2 13.6 L1.2 11 Z" fill="#f3e47c" stroke="#b69a3a" stroke-width=".5"/><path d="M12.2 10.6 L15.8 2.6 L16 5 L12.2 13.6 Z" fill="#a17c0c"/><path d="M6.6 3.2 L12.8 4.2 L11.8 6.4 L5.6 5.3 Z" fill="#fdf29a" opacity=".85"/></svg>
<svg style="left:60.3px;top:41.5px" width="12" height="15" viewBox="0 0 12 15"><path d="M0.5 0.5 H7 L10.5 4 V14 H0.5 Z" fill="#fbfcfe" stroke="#c9d2df" stroke-width=".7"/><circle cx="5.4" cy="8.6" r="3.4" fill="#4f94de" stroke="#3a78c4" stroke-width=".4"/><rect x="4.9" y="7.9" width="1.1" height="2.6" fill="#fff"/><rect x="4.9" y="6.3" width="1.1" height="1.1" fill="#fff"/></svg>
<svg style="left:14px;top:62.8px" width="16" height="17" viewBox="0 0 16 17"><g transform="translate(0 0) scale(1)"><path d="M0.5 0.5 H7.6 L11.5 4.4 V14.5 H0.5 Z" fill="url(#gd)" stroke="#c3cddc" stroke-width=".8"/><path d="M7.6 0.5 V4.4 H11.5" fill="#fff" stroke="#c3cddc" stroke-width=".7"/><rect x="2.2" y="5.6" width="7.4" height="7.4" fill="#b4c8e6" opacity=".9"/><path d="M2.2 7.3 H9.6" stroke="#fff" stroke-width=".7" opacity=".8"/><path d="M2.2 9.3 H9.6" stroke="#fff" stroke-width=".7" opacity=".8"/><path d="M2.2 11.2 H9.6" stroke="#fff" stroke-width=".7" opacity=".8"/></g><path d="M7.3 10.0 H9.4 V7.8999999999999995 H11.799999999999999 V10.0 H13.899999999999999 V12.399999999999999 H11.799999999999999 V14.5 H9.4 V12.399999999999999 H7.3 Z" fill="url(#gb)" stroke="#1a5cae" stroke-width=".6"/></svg>
<svg style="left:34px;top:62.8px" width="16" height="16" viewBox="0 0 16 16"><g transform="translate(0 0) scale(1)"><path d="M0.5 0.5 H7.6 L11.5 4.4 V14.5 H0.5 Z" fill="url(#gr)" stroke="#d9cfd6" stroke-width=".8"/><path d="M7.6 0.5 V4.4 H11.5" fill="#fff" stroke="#d9cfd6" stroke-width=".7"/><rect x="2.2" y="5.6" width="7.4" height="7.4" fill="#c9c4e0" opacity=".9"/><path d="M2.2 7.3 H9.6" stroke="#fff" stroke-width=".7" opacity=".8"/><path d="M2.2 9.3 H9.6" stroke="#fff" stroke-width=".7" opacity=".8"/><path d="M2.2 11.2 H9.6" stroke="#fff" stroke-width=".7" opacity=".8"/></g><rect x="6.8" y="9.6" width="7.2" height="3" rx=".6" fill="url(#gm)" stroke="#b23a2a" stroke-width=".5"/></svg>
<div style="left:52.3px;top:62.5px;width:1px;height:16px;background:#bcbcbc"></div>
<svg style="left:60.3px;top:62px" width="16" height="16" viewBox="0 0 16 16"><g transform="translate(0 1.2) scale(0.95)"><path d="M0.5 0.5 H7.6 L11.5 4.4 V14.5 H0.5 Z" fill="url(#gd)" stroke="#c3cddc" stroke-width=".8"/><path d="M7.6 0.5 V4.4 H11.5" fill="#fff" stroke="#c3cddc" stroke-width=".7"/><rect x="2.2" y="5.6" width="7.4" height="7.4" fill="#bccde8" opacity=".9"/><path d="M2.2 7.3 H9.6" stroke="#fff" stroke-width=".7" opacity=".8"/><path d="M2.2 9.3 H9.6" stroke="#fff" stroke-width=".7" opacity=".8"/><path d="M2.2 11.2 H9.6" stroke="#fff" stroke-width=".7" opacity=".8"/></g><path d="M12.8 2.4 L14 3.6 L6.8 11.8 L4.8 12.8 L5.6 10.6 Z" fill="#78c456" stroke="#4c9a38" stroke-width=".5"/><path d="M12.8 2.4 L14 3.6 L13 4.8 L11.8 3.6 Z" fill="#cf6a48"/><path d="M4.6 13 L5.0 11.6 L6 12.5 Z" fill="#444"/></svg>
<svg style="left:235.6px;top:64.8px" width="16" height="16" viewBox="0 0 16 16"><g transform="translate(0 0) scale(1)"><path d="M0.5 0.5 H7.6 L11.5 4.4 V14.5 H0.5 Z" fill="url(#gd)" stroke="#c3cddc" stroke-width=".8"/><path d="M7.6 0.5 V4.4 H11.5" fill="#fff" stroke="#c3cddc" stroke-width=".7"/><rect x="2.2" y="5.6" width="7.4" height="7.4" fill="#b4c8e6" opacity=".9"/><path d="M2.2 7.3 H9.6" stroke="#fff" stroke-width=".7" opacity=".8"/><path d="M2.2 9.3 H9.6" stroke="#fff" stroke-width=".7" opacity=".8"/><path d="M2.2 11.2 H9.6" stroke="#fff" stroke-width=".7" opacity=".8"/></g></svg>
<svg style="left:256px;top:64.8px" width="16" height="17" viewBox="0 0 16 17"><g transform="translate(0 0) scale(1)"><path d="M0.5 0.5 H7.6 L11.5 4.4 V14.5 H0.5 Z" fill="url(#gd)" stroke="#c3cddc" stroke-width=".8"/><path d="M7.6 0.5 V4.4 H11.5" fill="#fff" stroke="#c3cddc" stroke-width=".7"/><rect x="2.2" y="5.6" width="7.4" height="7.4" fill="#b4c8e6" opacity=".9"/><path d="M2.2 7.3 H9.6" stroke="#fff" stroke-width=".7" opacity=".8"/><path d="M2.2 9.3 H9.6" stroke="#fff" stroke-width=".7" opacity=".8"/><path d="M2.2 11.2 H9.6" stroke="#fff" stroke-width=".7" opacity=".8"/></g><path d="M7.3 10.0 H9.4 V7.8999999999999995 H11.799999999999999 V10.0 H13.899999999999999 V12.399999999999999 H11.799999999999999 V14.5 H9.4 V12.399999999999999 H7.3 Z" fill="url(#gb)" stroke="#1a5cae" stroke-width=".6"/></svg>
<svg style="left:274.6px;top:64.4px" width="17" height="17" viewBox="0 0 17 17"><path d="M1 3.2 L5.5 1.5 L7 3 L13.6 2.2 L14 12 L2 13.6 Z" fill="url(#gf)" stroke="#e6c955" stroke-width=".7"/><path d="M1.6 5 L13.8 4 L14 12 L2 13.6 Z" fill="#f7e27a" opacity=".85"/><path d="M7.8999999999999995 10.4 H10.0 V8.3 H12.399999999999999 V10.4 H14.5 V12.799999999999999 H12.399999999999999 V14.899999999999999 H10.0 V12.799999999999999 H7.8999999999999995 Z" fill="url(#gb)" stroke="#1a5cae" stroke-width=".6"/></svg>
<div style="left:293.3px;top:64.5px;width:1px;height:16px;background:#bcbcbc"></div>
<svg style="left:301.3px;top:64.8px" width="16" height="16" viewBox="0 0 16 16"><g transform="translate(0 0) scale(1)"><path d="M0.5 0.5 H7.6 L11.5 4.4 V14.5 H0.5 Z" fill="url(#gr)" stroke="#d9cfd6" stroke-width=".8"/><path d="M7.6 0.5 V4.4 H11.5" fill="#fff" stroke="#d9cfd6" stroke-width=".7"/><rect x="2.2" y="5.6" width="7.4" height="7.4" fill="#c9c4e0" opacity=".9"/><path d="M2.2 7.3 H9.6" stroke="#fff" stroke-width=".7" opacity=".8"/><path d="M2.2 9.3 H9.6" stroke="#fff" stroke-width=".7" opacity=".8"/><path d="M2.2 11.2 H9.6" stroke="#fff" stroke-width=".7" opacity=".8"/></g><rect x="6.8" y="9.6" width="7.2" height="3" rx=".6" fill="url(#gm)" stroke="#b23a2a" stroke-width=".5"/></svg>
<svg style="left:322px;top:64.8px" width="17" height="16" viewBox="0 0 17 16"><g transform="translate(0 0) scale(1)"><path d="M0.5 0.5 H7.6 L11.5 4.4 V14.5 H0.5 Z" fill="url(#gd)" stroke="#c3cddc" stroke-width=".8"/><path d="M7.6 0.5 V4.4 H11.5" fill="#fff" stroke="#c3cddc" stroke-width=".7"/></g><circle cx="6.2" cy="8.8" r="4.4" fill="#e24a2c" stroke="#c23a22" stroke-width=".5"/><ellipse cx="6.2" cy="8.4" rx="2.6" ry="1.4" fill="#f08a6c" opacity=".8"/><path d="M10.4 9 L13 10.4 L10.4 11.8 Z" fill="#a52c1c"/></svg>
<div style="left:341px;top:64.5px;width:1px;height:16px;background:#bcbcbc"></div>
<svg style="left:347.6px;top:64px" width="16" height="16" viewBox="0 0 16 16"><g transform="translate(0 1.2) scale(0.95)"><path d="M0.5 0.5 H7.6 L11.5 4.4 V14.5 H0.5 Z" fill="url(#gd)" stroke="#c3cddc" stroke-width=".8"/><path d="M7.6 0.5 V4.4 H11.5" fill="#fff" stroke="#c3cddc" stroke-width=".7"/><rect x="2.2" y="5.6" width="7.4" height="7.4" fill="#bccde8" opacity=".9"/><path d="M2.2 7.3 H9.6" stroke="#fff" stroke-width=".7" opacity=".8"/><path d="M2.2 9.3 H9.6" stroke="#fff" stroke-width=".7" opacity=".8"/><path d="M2.2 11.2 H9.6" stroke="#fff" stroke-width=".7" opacity=".8"/></g><path d="M12.8 2.4 L14 3.6 L6.8 11.8 L4.8 12.8 L5.6 10.6 Z" fill="#78c456" stroke="#4c9a38" stroke-width=".5"/><path d="M12.8 2.4 L14 3.6 L13 4.8 L11.8 3.6 Z" fill="#cf6a48"/><path d="M4.6 13 L5.0 11.6 L6 12.5 Z" fill="#444"/></svg>
<div style="left:366px;top:64.5px;width:1px;height:16px;background:#bcbcbc"></div>
<svg style="left:373px;top:65.2px" width="15" height="14" viewBox="0 0 15 14"><path d="M2.6 10.4 V6.6 A4.9 5.3 0 0 1 12.4 6.6 V10.4" fill="none" stroke="#555" stroke-width="1.05"/><rect x="1.3" y="8" width="2.5" height="4.8" rx=".9" fill="#8c8c8c" stroke="#5e5e5e" stroke-width=".45"/><rect x="11.2" y="8" width="2.5" height="4.8" rx=".9" fill="#8c8c8c" stroke="#5e5e5e" stroke-width=".45"/></svg>
<div style="left:392px;top:64.5px;width:1px;height:16px;background:#bcbcbc"></div>
<svg style="left:398px;top:64.6px" width="16" height="15" viewBox="0 0 16 15"><text x="8.4" y="6.9" text-anchor="middle" font-family="Liberation Sans, sans-serif" font-weight="bold" font-size="7" fill="#141c2c" textLength="13.8" lengthAdjust="spacingAndGlyphs">TAG</text><path d="M4 12.6 L8.6 8.6 L13.2 12.6" fill="none" stroke="#1f6dbd" stroke-width="2.2" stroke-linejoin="miter"/></svg>
<div style="left:418px;top:64.5px;width:1px;height:16px;background:#bcbcbc"></div>
<svg style="left:425px;top:65px" width="16" height="16" viewBox="0 0 16 16"><g transform="translate(0 0) scale(0.78)"><path d="M0.5 0.5 H7.6 L11.5 4.4 V14.5 H0.5 Z" fill="#f3f6fb" stroke="#c5d0e0" stroke-width=".8"/><path d="M7.6 0.5 V4.4 H11.5" fill="#fff" stroke="#c5d0e0" stroke-width=".7"/><rect x="2.2" y="5.6" width="7.4" height="7.4" fill="#bccbe4" opacity=".9"/><path d="M2.2 7.3 H9.6" stroke="#fff" stroke-width=".7" opacity=".8"/><path d="M2.2 9.3 H9.6" stroke="#fff" stroke-width=".7" opacity=".8"/><path d="M2.2 11.2 H9.6" stroke="#fff" stroke-width=".7" opacity=".8"/></g><g transform="translate(5.4 3.6) scale(0.8)"><path d="M0.5 0.5 H7.6 L11.5 4.4 V14.5 H0.5 Z" fill="#eef2f9" stroke="#bcc9dc" stroke-width=".8"/><path d="M7.6 0.5 V4.4 H11.5" fill="#fff" stroke="#bcc9dc" stroke-width=".7"/><rect x="2.2" y="5.6" width="7.4" height="7.4" fill="#b4c5e0" opacity=".9"/><path d="M2.2 7.3 H9.6" stroke="#fff" stroke-width=".7" opacity=".8"/><path d="M2.2 9.3 H9.6" stroke="#fff" stroke-width=".7" opacity=".8"/><path d="M2.2 11.2 H9.6" stroke="#fff" stroke-width=".7" opacity=".8"/></g></svg>
<svg style="left:446.4px;top:63.6px" width="14" height="16" viewBox="0 0 14 16"><rect x="0.6" y="2.4" width="12.2" height="13" rx="1" fill="#f4bd6e" stroke="#e0a04a" stroke-width=".7"/><rect x="2.8" y="5" width="7.8" height="8.6" fill="#ccd6ef" stroke="#aab8dd" stroke-width=".5"/><rect x="4.4" y="1" width="4.6" height="3" rx=".8" fill="#d9dde6" stroke="#b78c8c" stroke-width=".5"/></svg>
<div style="left:465px;top:64.5px;width:1px;height:16px;background:#bcbcbc"></div>
<svg style="left:472.6px;top:65.6px" width="14" height="14" viewBox="0 0 14 14"><path d="M2.4 7.4 A4.4 4.4 0 0 1 9 3.4" fill="none" stroke="#5aa2e8" stroke-width="1.9"/><path d="M8 1.2 L11.6 3.8 L7.8 5.8 Z" fill="#4a96e2"/><path d="M11.6 6.6 A4.4 4.4 0 0 1 5 10.6" fill="none" stroke="#3f8ade" stroke-width="1.9"/><path d="M6 12.8 L2.4 10.2 L6.2 8.2 Z" fill="#3f8ade"/></svg>
</body></html>
